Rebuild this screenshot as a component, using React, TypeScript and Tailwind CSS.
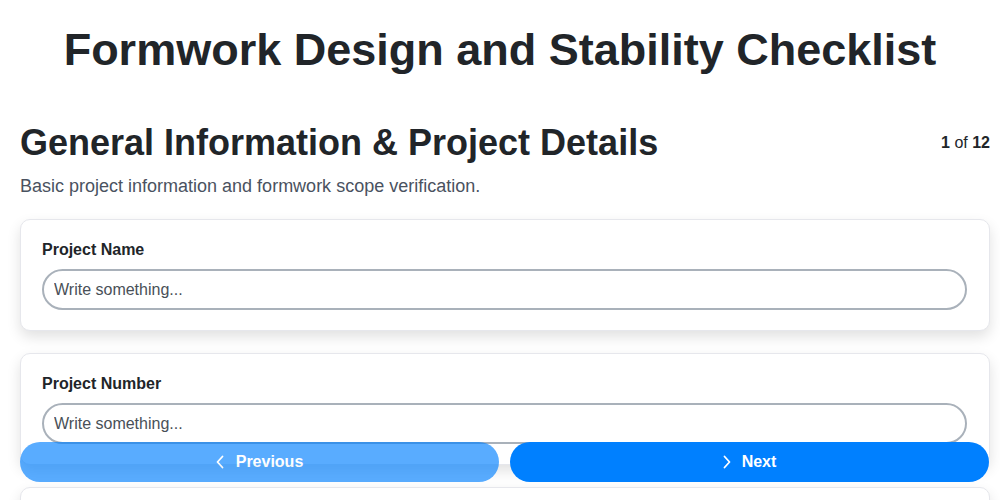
const FIELDS = ['Project Name', 'Project Number', 'Project Location']

function Chevron({ dir }: { dir: 'left' | 'right' }) {
  return (
    <svg viewBox="0 0 8 14" className="h-[14px] w-[8px]" fill="none" stroke="currentColor" strokeWidth={1.8} strokeLinecap="round" strokeLinejoin="round">
      {dir === 'left' ? <polyline points="6.5,1.5 1.5,7 6.5,12.5" /> : <polyline points="1.5,1.5 6.5,7 1.5,12.5" />}
    </svg>
  )
}

function FieldCard({ label }: { label: string }) {
  return (
    <div className="rounded-[10px] border border-[#e6e7ec] bg-white pt-[20px] pr-[21px] pb-[20px] pl-[21px] shadow-[0_6px_14px_rgba(0,0,0,0.12)]">
      <label className="block text-base leading-[20px] font-bold text-[#212529]">{label}</label>
      <input
        type="text"
        placeholder="Write something..."
        className="mt-[9px] block h-[41px] w-[calc(100%-1px)] rounded-full border-2 border-[#a9b1ba] bg-white px-[10px] text-base text-[#212529] placeholder:text-[#495057] focus:outline-none"
      />
    </div>
  )
}

export default function App() {
  return (
    <div className="min-h-screen bg-white font-['Liberation_Sans',Arial,sans-serif] text-[#212529]">
      <h1 className="pt-[23px] text-center text-[45px] leading-[54px] font-bold">
        Formwork Design and Stability Checklist
      </h1>

      <div className="pl-5 pr-[10px] pb-24">
        <div className="mt-[44px] flex items-start justify-between">
          <h2 className="text-4xl leading-[43px] font-bold">General Information &amp; Project Details</h2>
          <span className="mt-[10px] text-base">
            <b>1</b> of <b>12</b>
          </span>
        </div>
        <p className="mt-[9px] text-[18px] leading-[27px] text-[#4a5260]">
          Basic project information and formwork scope verification.
        </p>

        <div className="mt-[19px] flex flex-col gap-[22px]">
          {FIELDS.map((f) => (
            <FieldCard key={f} label={f} />
          ))}
        </div>
      </div>

      <div className="fixed right-[11px] bottom-[18px] left-5 flex gap-[11px]">
        <button className="flex h-[40px] flex-1 items-center justify-center gap-[12px] rounded-full bg-[#0080ff] text-base font-bold text-white opacity-65">
          <Chevron dir="left" />
          Previous
        </button>
        <button className="flex h-[40px] flex-1 items-center justify-center gap-[11px] rounded-full bg-[#0080ff] text-base font-bold text-white">
          <Chevron dir="right" />
          Next
        </button>
      </div>
    </div>
  )
}
